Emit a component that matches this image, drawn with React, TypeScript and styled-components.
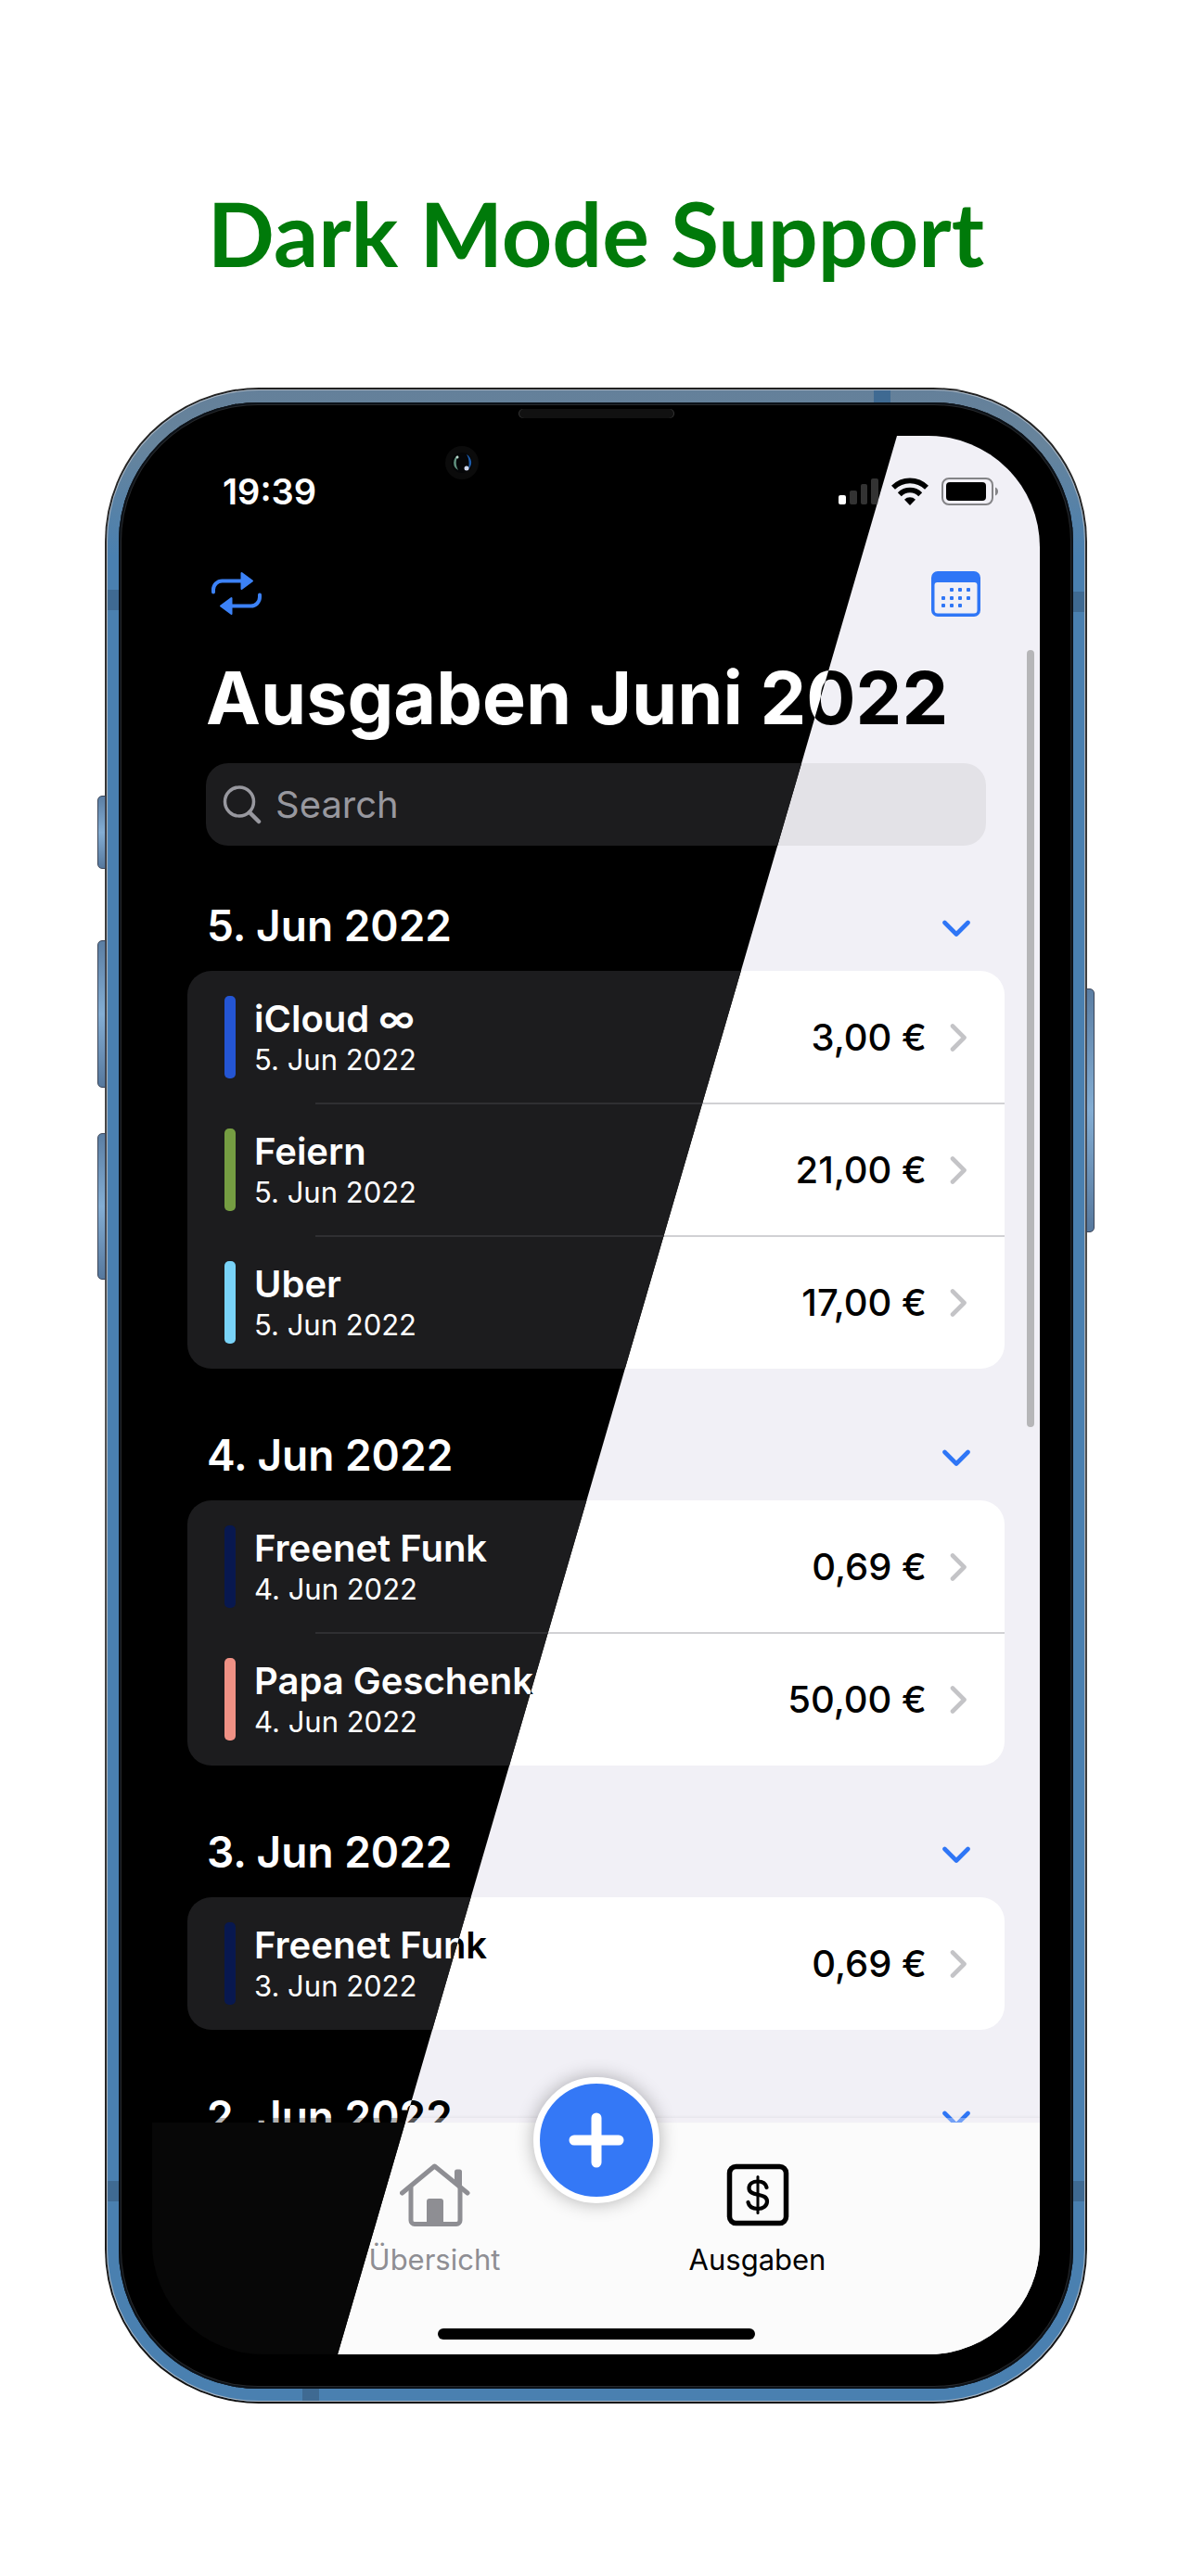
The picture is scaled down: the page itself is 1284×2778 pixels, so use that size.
import React from "react";
import styled, { createGlobalStyle, ThemeProvider } from "styled-components";

const dark = {
  page: "#000000", text: "#ffffff", card: "#1c1c1e", field: "#1c1c1e", hint: "#98989f",
  line: "#2f2f32", bar: "#070707", accent: "#3c82f7", scroll: "#000000", veil: "rgba(0,0,0,0.3)",
  chevron: "#5a5a5e", ring: "#000000", shade: "transparent", clip: "polygon(0 0, 803px 0, 200px 100%, 0 100%)",
};
const light = {
  page: "#f1f0f6", text: "#000000", card: "#ffffff", field: "#e3e2e7", hint: "#8a8a8e",
  line: "#d1d1d4", bar: "#fbfbfb", accent: "#2f76f6", scroll: "#b6b6b8", veil: "rgba(243,242,247,0.35)",
  chevron: "#c4c4c7", ring: "#ffffff", shade: "rgba(0,0,0,0.3)", clip: "polygon(802px 0, 100% 0, 100% 100%, 199px 100%)",
};
type Palette = typeof dark;

const Global = createGlobalStyle`
  *, *::before, *::after { box-sizing: border-box; }
  body { margin: 0; background: #ffffff; }
  button, input { font: inherit; color: inherit; border: 0; background: none; padding: 0; margin: 0; }
`;

const Page = styled.main`
  display: flex;
  flex-direction: column;
  min-height: 100vh;
  padding: 194px 112px 186px 113px;
  gap: 110px;
  font-family: Inter, "Liberation Sans", sans-serif;
`;
const Headline = styled.h1`
  margin: 0;
  text-align: center;
  font: 700 95px/114px Lato, "Open Sans", sans-serif;
  color: #007a0a;
`;
const Phone = styled.div`
  position: relative;
  padding: 2px;
  border-radius: 166px;
  background: linear-gradient(#222 0%, #555 50%, #111 100%);
`;
const Frame = styled.div`
  position: relative;
  padding: 14px 13px;
  border-radius: 164px;
  background: linear-gradient(#64809a 0, #67849c 60px, #4a80b0 180px, #4a80b0 100%);
  box-shadow: inset 0 0 0 1px #a9b4c0;
`;
const Glass = styled.div`
  position: relative;
  padding: 36px 36px 37px;
  border-radius: 150px;
  background: #000000;
  box-shadow: inset 0 0 0 2px #0c1219, inset 0 0 0 3px #26282b;
`;
const SideKey = styled.span<{ $side: "left" | "right"; $top: number; $height: number }>`
  position: absolute;
  ${(p) => p.$side}: -8px;
  top: ${(p) => p.$top}px;
  width: 9px;
  height: ${(p) => p.$height}px;
  border: 1px solid #3b4558;
  border-radius: ${(p) => (p.$side === "left" ? "5px 0 0 5px" : "0 5px 5px 0")};
  background: linear-gradient(#5b7ea3, #84aed4 50%, #56789d);
`;
const Band = styled.span<{ $vertical?: boolean }>`
  position: absolute;
  width: ${(p) => (p.$vertical ? 18 : 13)}px;
  height: ${(p) => (p.$vertical ? 13 : 22)}px;
  background: #3f6a92;
`;
const BandTop = styled(Band)` top: 1px; right: 210px; `;
const BandBottom = styled(Band)` bottom: 1px; left: 211px; `;
const BandLeft = styled(Band)<{ $low?: boolean }>` left: 1px; ${(p) => (p.$low ? "bottom: 216px" : "top: 216px")}; `;
const BandRight = styled(Band)<{ $low?: boolean }>` right: 1px; ${(p) => (p.$low ? "bottom: 216px" : "top: 218px")}; `;
const Speaker = styled.span`
  position: absolute;
  top: 7px;
  left: 50%;
  width: 168px;
  height: 10px;
  margin-left: -84px;
  border-radius: 5px;
  background: #111111;
  box-shadow: inset 1px 0 0 #333333, inset -1px 0 0 #333333;
`;
const Camera = styled.svg`
  position: absolute;
  z-index: 2;
  top: 47px;
  left: 352px;
  width: 36px;
  height: 36px;
`;
const Display = styled.div`
  display: grid;
  overflow: hidden;
  border-radius: 120px;
  background: #000000;
`;
const Screen = styled.section`
  grid-area: 1 / 1;
  display: flex;
  flex-direction: column;
  min-width: 0;
  position: relative;
  color: ${(p) => (p.theme as Palette).text};
  background: ${(p) => (p.theme as Palette).page};
  clip-path: ${(p) => (p.theme as Palette).clip};
`;
const StatusBar = styled.div`
  display: flex;
  align-items: center;
  justify-content: space-between;
  height: 120px;
  padding: 0 44px 0 76px;
`;
const Clock = styled.time` font-size: 38px; line-height: 48px; font-weight: 600; `;
const Signals = styled.div` display: flex; align-items: center; gap: 14px; `;
const Toolbar = styled.nav`
  display: flex;
  align-items: center;
  justify-content: space-between;
  height: 100px;
  padding: 0 64px 0 63px;
  color: ${(p) => (p.theme as Palette).accent};
`;
const IconButton = styled.button` display: flex; color: inherit; `;
const Title = styled.h2`
  margin: 0;
  padding: 12px 0 0 58px;
  font-size: 79px;
  line-height: 100px;
  font-weight: 700;
  white-space: nowrap;
`;
const SearchField = styled.label`
  display: flex;
  align-items: center;
  gap: 15px;
  height: 89px;
  margin: 21px 58px 0;
  padding: 0 18px;
  border-radius: 24px;
  color: ${(p) => (p.theme as Palette).hint};
  background: ${(p) => (p.theme as Palette).field};
`;
const SearchInput = styled.input`
  flex: 1;
  min-width: 0;
  font-size: 40px;
  line-height: 50px;
  outline: none;
  &::placeholder { color: inherit; opacity: 1; }
`;
const List = styled.div`
  display: flex;
  flex-direction: column;
  height: 1384px;
  margin-top: -7px;
  overflow: hidden;
`;
const DayHeader = styled.header`
  display: flex;
  flex: none;
  align-items: flex-end;
  justify-content: space-between;
  height: 142px;
  padding: 0 75px 20px 59px;
  color: ${(p) => (p.theme as Palette).accent};
`;
const DayTitle = styled.h3`
  margin: 0;
  font-size: 46px;
  line-height: 58px;
  font-weight: 600;
  color: ${(p) => (p.theme as Palette).text};
`;
const Toggle = styled(IconButton)` padding-bottom: 16px; `;
const Card = styled.ul`
  flex: none;
  margin: 0 38px;
  padding: 0;
  list-style: none;
  border-radius: 26px;
  background: ${(p) => (p.theme as Palette).card};
`;
const Row = styled.li`
  position: relative;
  display: flex;
  align-items: center;
  height: 143px;
  padding: 0 40px;
  & + &::before {
    content: "";
    position: absolute;
    top: -1px;
    left: 138px;
    right: 0;
    height: 2px;
    background: ${(p) => (p.theme as Palette).line};
  }
`;
const Stripe = styled.span<{ $color: string }>`
  width: 12px;
  height: 89px;
  margin-right: 20px;
  border-radius: 5px;
  background: ${(p) => p.$color};
`;
const Entry = styled.div` flex: 1; display: flex; flex-direction: column; padding-top: 1px; `;
const Name = styled.span` font-size: 40px; line-height: 48px; font-weight: 600; `;
const When = styled.time` font-size: 31px; line-height: 40px; `;
const Amount = styled.span` margin-right: 25px; font-size: 40px; line-height: 50px; font-weight: 500; `;
const Chevron = styled.svg` color: ${(p) => (p.theme as Palette).chevron}; `;
const ScrollThumb = styled.span`
  position: absolute;
  top: 231px;
  right: 6px;
  width: 8px;
  height: 838px;
  border-radius: 4px;
  background: ${(p) => (p.theme as Palette).scroll};
`;
const TabBar = styled.nav`
  position: relative;
  display: grid;
  grid-template-columns: 1fr 174px 174px 174px 1fr;
  height: 250px;
  background: ${(p) => (p.theme as Palette).bar};
  &::before {
    content: "";
    position: absolute;
    top: -5px;
    left: 0;
    right: 0;
    height: 5px;
    background: ${(p) => (p.theme as Palette).veil};
    box-shadow: 0 -1px 3px rgba(0, 0, 0, 0.06);
  }
`;
const Tab = styled.a<{ $active?: boolean; $column: number }>`
  grid-column: ${(p) => p.$column};
  display: flex;
  flex-direction: column;
  align-items: center;
  gap: 17px;
  padding-top: 44px;
  font-size: 31px;
  line-height: 38px;
  text-decoration: none;
  color: ${(p) => (p.$active ? (p.theme as Palette).text : "#8e8e93")};
`;
const AddButton = styled.button`
  grid-column: 3;
  justify-self: center;
  position: relative;
  display: flex;
  align-items: center;
  justify-content: center;
  width: 136px;
  height: 136px;
  margin-top: -49px;
  border: 7px solid ${(p) => (p.theme as Palette).ring};
  border-radius: 50%;
  color: #ffffff;
  background: #3478f6;
  box-shadow: 0 0 20px ${(p) => (p.theme as Palette).shade};
`;
const HomeIndicator = styled.span`
  position: absolute;
  bottom: 16px;
  left: 50%;
  width: 342px;
  height: 12px;
  margin-left: -171px;
  border-radius: 6px;
  background: ${(p) => (p.theme as Palette).text};
`;

const Cellular = () => (
  <svg width="43" height="28" viewBox="0 0 43 28" fill="currentColor" aria-hidden="true">
    <rect x="0" y="18" width="8" height="10" rx="2" />
    <g opacity="0.2">
      <rect x="12" y="13" width="8" height="15" rx="2" />
      <rect x="24" y="6" width="7" height="22" rx="2" />
      <rect x="35" y="0" width="8" height="28" rx="2" />
    </g>
  </svg>
);
const Wifi = () => (
  <svg width="40" height="30" viewBox="0 0 40 30" aria-hidden="true">
    <g fill="none" stroke="currentColor" strokeWidth="5.6">
      <path d="M2 10.800a25.500 25.500 0 0 1 36 0" />
      <path d="M8.800 18.200a15.800 15.800 0 0 1 22.400 0" />
    </g>
    <path fill="currentColor" d="M20 30l-6-6.200a8.600 8.600 0 0 1 12 0z" />
  </svg>
);
const Battery = () => (
  <svg width="62" height="30" viewBox="0 0 62 30" aria-hidden="true">
    <rect x="1" y="1" width="54" height="28" rx="7" fill="none" stroke="currentColor" strokeOpacity="0.45" strokeWidth="2" />
    <rect x="5" y="5" width="43" height="20" rx="4" fill="currentColor" />
    <path d="M58 10.500c4 1.500 4 7.500 0 9z" fill="currentColor" fillOpacity="0.45" />
  </svg>
);
const Repeat = () => (
  <svg width="56" height="48" viewBox="0 0 56 48" aria-hidden="true">
    <g fill="none" stroke="currentColor" strokeWidth="4" strokeLinecap="round">
      <path d="M3 22.500v-2.500a9.500 9.500 0 0 1 9.500-9.500H34" />
      <path d="M53 25.500v2.500a9.500 9.500 0 0 1-9.500 9.500H22" />
    </g>
    <g fill="currentColor" stroke="currentColor" strokeWidth="2" strokeLinejoin="round">
      <path d="M33.500 2v17L45 10.500z" />
      <path d="M22.500 29v17L11 37.500z" />
    </g>
  </svg>
);
const Calendar = () => (
  <svg width="53" height="49" viewBox="0 0 53 49" fill="currentColor" aria-hidden="true">
    <path fillRule="evenodd" d="M7 0h39a7 7 0 0 1 7 7v35a7 7 0 0 1-7 7H7a7 7 0 0 1-7-7V7a7 7 0 0 1 7-7zM6.500 12A3 3 0 0 0 3.500 15v27a3.500 3.500 0 0 0 3.500 3.500h39a3.500 3.500 0 0 0 3.500-3.500V15a3 3 0 0 0-3-3z" />
    {[[20, 18], [29, 18], [38, 18], [11, 27], [20, 27], [29, 27], [38, 27], [11, 35], [20, 35], [29, 35]].map(([x, y]) => (
      <rect key={`${x}-${y}`} x={x} y={y} width="4" height="4" rx="1" />
    ))}
  </svg>
);
const Magnifier = () => (
  <svg width="42" height="42" viewBox="0 0 42 42" fill="none" stroke="currentColor" strokeWidth="3.500" strokeLinecap="round" aria-hidden="true">
    <circle cx="18" cy="17.500" r="15.500" />
    <path d="M29 29l10 10" strokeWidth="4.500" />
  </svg>
);
const ChevronDown = () => (
  <svg width="30" height="19" viewBox="0 0 30 19" fill="none" stroke="currentColor" strokeWidth="4.600" strokeLinecap="round" strokeLinejoin="round" aria-hidden="true">
    <path d="M2.500 3L15 15.500 27.500 3" />
  </svg>
);
const House = () => (
  <svg width="76" height="68" viewBox="0 0 76 68" aria-hidden="true">
    <g fill="none" stroke="currentColor" strokeWidth="5" strokeLinecap="round" strokeLinejoin="round">
      <path d="M2.500 32L37.500 3l35.500 29" />
      <path d="M12 26v35.500a4 4 0 0 0 4 4h45a4 4 0 0 0 4-4V26" />
    </g>
    <path d="M59 21V9a2.500 2.500 0 0 1 2.500-2.500h3A2.500 2.500 0 0 1 67 9v18z" fill="currentColor" />
    <path d="M29 66V41a3 3 0 0 1 3-3h12a3 3 0 0 1 3 3v25z" fill="currentColor" />
  </svg>
);
const Money = () => (
  <svg width="68" height="68" viewBox="0 0 68 68" fill="none" stroke="currentColor" aria-hidden="true">
    <rect x="3.500" y="3.500" width="61" height="61" rx="7" strokeWidth="5.500" />
    <g strokeWidth="4.200" strokeLinecap="round">
      <path d="M43.500 26c-1-4.500-5-6.500-9.500-6.500-5.500 0-9.500 2.800-9.500 7.200 0 9.800 19.500 4.300 19.500 14.300 0 5-4.500 8-10 8s-9.500-2.500-10.500-7" />
      <path d="M34 14.500v39" strokeWidth="3" />
    </g>
  </svg>
);
const Plus = () => (
  <svg width="60" height="60" viewBox="0 0 60 60" fill="none" stroke="currentColor" strokeWidth="11" strokeLinecap="round" aria-hidden="true">
    <path d="M30 6v48M6 30h48" />
  </svg>
);

const days = [
  { label: "5. Jun 2022", items: [
    { name: "iCloud ∞", amount: "3,00 €", color: "#2455d3" },
    { name: "Feiern", amount: "21,00 €", color: "#759d42" },
    { name: "Uber", amount: "17,00 €", color: "#79d3f8" },
  ] },
  { label: "4. Jun 2022", items: [
    { name: "Freenet Funk", amount: "0,69 €", color: "#08184f" },
    { name: "Papa Geschenk", amount: "50,00 €", color: "#ef9185" },
  ] },
  { label: "3. Jun 2022", items: [{ name: "Freenet Funk", amount: "0,69 €", color: "#08184f" }] },
  { label: "2. Jun 2022", items: [] },
];

function ExpenseScreen({ palette, copy }: { palette: Palette; copy?: boolean }) {
  return (
    <ThemeProvider theme={palette}>
      <Screen aria-hidden={copy} inert={copy}>
        <StatusBar>
          <Clock>19:39</Clock>
          <Signals><Cellular /><Wifi /><Battery /></Signals>
        </StatusBar>
        <Toolbar>
          <IconButton type="button" aria-label="Daueraufträge"><Repeat /></IconButton>
          <IconButton type="button" aria-label="Kalender"><Calendar /></IconButton>
        </Toolbar>
        <Title>Ausgaben Juni 2022</Title>
        <SearchField>
          <Magnifier />
          <SearchInput type="text" placeholder="Search" aria-label="Search" />
        </SearchField>
        <List>
          {days.map((day) => (
            <React.Fragment key={day.label}>
              <DayHeader>
                <DayTitle>{day.label}</DayTitle>
                <Toggle type="button" aria-label={day.label}><ChevronDown /></Toggle>
              </DayHeader>
              {day.items.length > 0 && (
                <Card>
                  {day.items.map((item) => (
                    <Row key={item.name}>
                      <Stripe $color={item.color} />
                      <Entry>
                        <Name>{item.name}</Name>
                        <When>{day.label}</When>
                      </Entry>
                      <Amount>{item.amount}</Amount>
                      <Chevron width="19" height="30" viewBox="0 0 19 30" fill="none" stroke="currentColor" strokeWidth="4.600" strokeLinecap="round" strokeLinejoin="round" aria-hidden="true">
                        <path d="M3 2.500L15.500 15 3 27.500" />
                      </Chevron>
                    </Row>
                  ))}
                </Card>
              )}
            </React.Fragment>
          ))}
        </List>
        <ScrollThumb />
        <TabBar>
          <Tab href="#overview" $column={2}><House />Übersicht</Tab>
          <AddButton type="button" aria-label="Neu"><Plus /></AddButton>
          <Tab href="#expenses" $column={4} $active><Money />Ausgaben</Tab>
          <HomeIndicator />
        </TabBar>
      </Screen>
    </ThemeProvider>
  );
}

export default function App() {
  return (
    <Page>
      <Global />
      <Headline>Dark Mode Support</Headline>
      <Phone>
        <SideKey $side="left" $top={440} $height={79} />
        <SideKey $side="left" $top={596} $height={159} />
        <SideKey $side="left" $top={804} $height={158} />
        <SideKey $side="right" $top={648} $height={263} />
        <Frame>
          <BandTop $vertical /><BandBottom $vertical />
          <BandLeft /><BandLeft $low /><BandRight /><BandRight $low />
          <Glass>
            <Speaker />
            <Camera viewBox="0 0 36 36" aria-hidden="true">
              <circle cx="18" cy="18" r="18" fill="#0b0b0b" />
              <circle cx="18" cy="18" r="11" fill="#050608" />
              <path d="M14 10a9 9 0 0 0 0 16c-3-5-3-11 0-16z" fill="#5f8f7d" />
              <path d="M23 9a10 10 0 0 1 2 16c1-6 1-11-2-16z" fill="#1c5aa8" />
              <circle cx="23" cy="24" r="2.500" fill="#cfd8ee" />
              <circle cx="13" cy="12" r="1.500" fill="#b9d8cc" />
            </Camera>
            <Display>
              <ExpenseScreen palette={light} />
              <ExpenseScreen palette={dark} copy />
            </Display>
          </Glass>
        </Frame>
      </Phone>
    </Page>
  );
}
